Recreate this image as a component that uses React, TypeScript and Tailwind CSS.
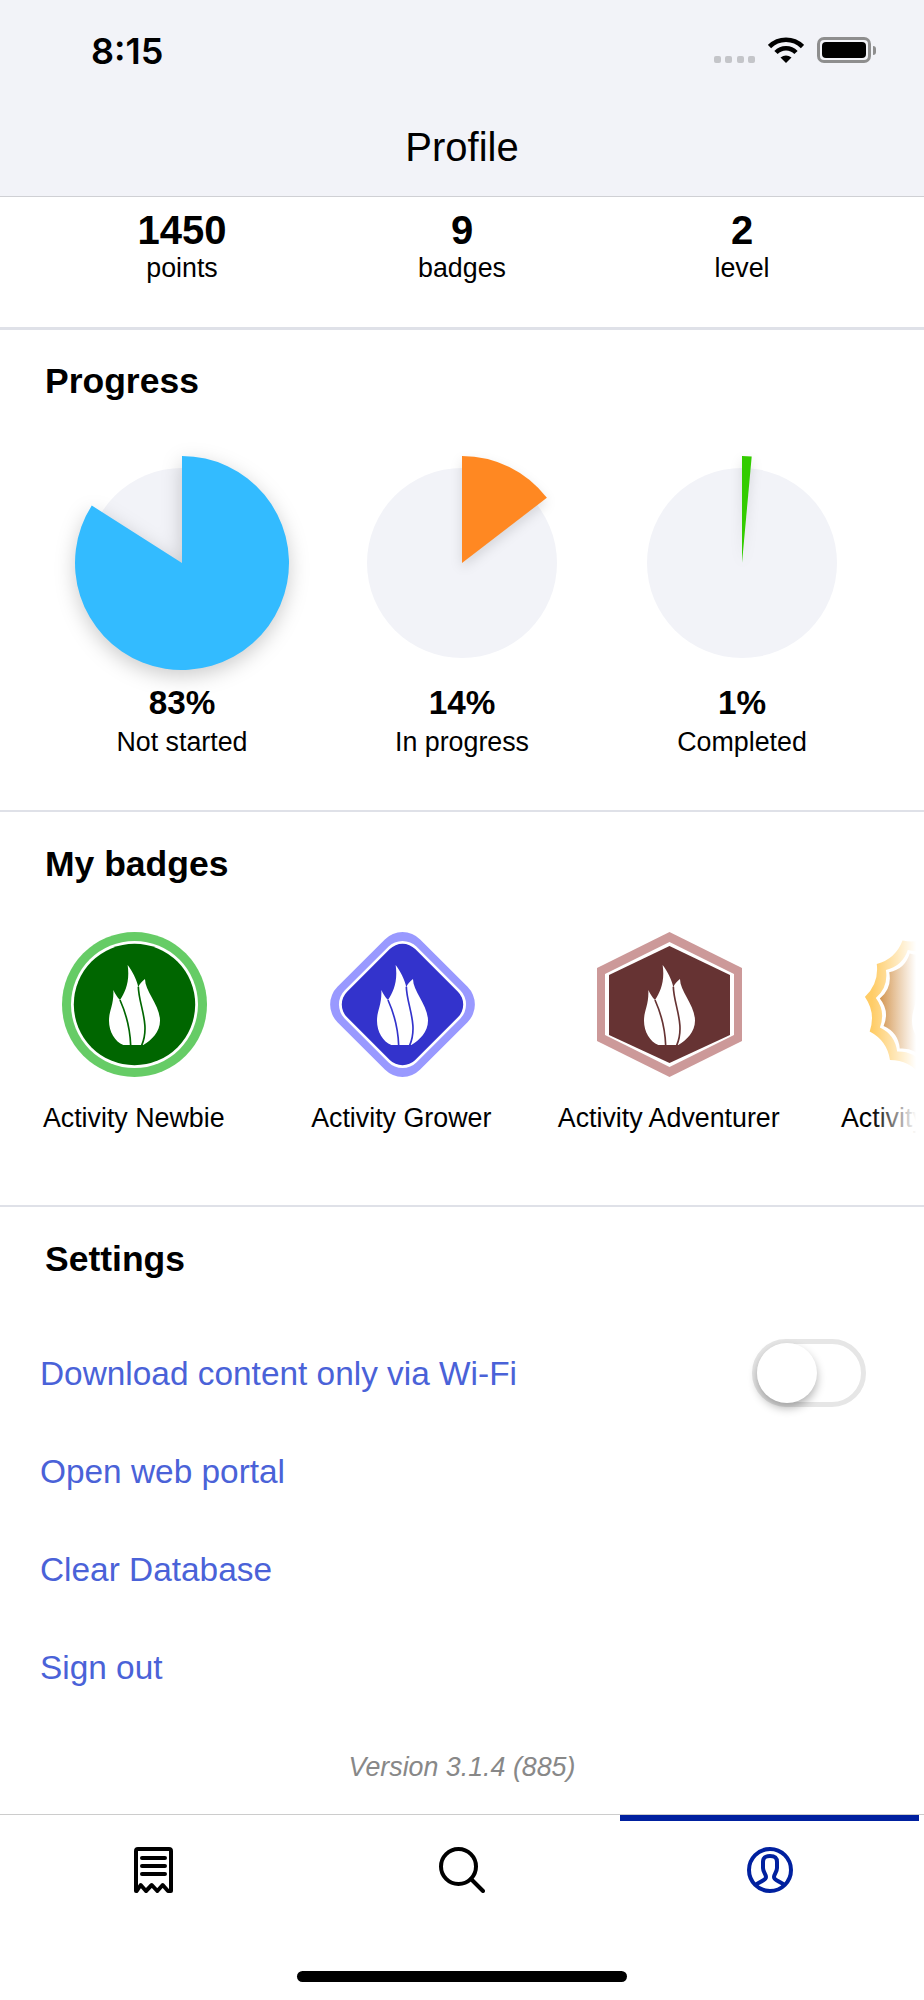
const sans = "font-['Liberation_Sans',Arial,sans-serif]";

// pie slice from 12 o'clock, clockwise
const slice = (deg: number, r = 107, c = 107) => {
  const a = (deg * Math.PI) / 180;
  const x = c + r * Math.sin(a);
  const y = c - r * Math.cos(a);
  return `M${c} ${c} L${c} ${c - r} A${r} ${r} 0 ${deg > 180 ? 1 : 0} 1 ${x.toFixed(2)} ${y.toFixed(2)} Z`;
};

// scalloped edge of the gold badge
const star = (r: number, dent: number) => {
  const n = 13;
  const off = 174;
  const pt = (d: number, rad: number) => {
    const a = (d * Math.PI) / 180;
    return `${(72.5 + rad * Math.cos(a)).toFixed(2)} ${(72.5 - rad * Math.sin(a)).toFixed(2)}`;
  };
  let d = `M${pt(off, r)}`;
  for (let i = 1; i <= n; i++) {
    const a = off + (i * 360) / n;
    d += ` Q${pt(a - 180 / n, dent)} ${pt(a, r)}`;
  }
  return d + "Z";
};

const Flame = ({ color }: { color: string }) => (
  <g transform="translate(28 18) scale(0.3333)">
    <path
      d="M70 120 C76 132 82 142 90 150 C106 125 120 95 113 45 C126 62 140 88 145 112 C148 102 155 95 165 87 C165 125 210 165 210 212 C210 245 185 270 160 285 L100 285 C75 275 57 245 57 212 C57 180 72 165 70 120Z"
      fill="#fff"
    />
    <path
      d="M90 150 C108 190 120 230 122 286 M145 110 C146 165 182 225 155 286"
      fill="none"
      stroke={color}
      strokeWidth="5"
    />
  </g>
);

const Badge = ({ kind }: { kind: number }) => (
  <svg width="145" height="145" viewBox="0 0 145 145" className="shrink-0">
    <defs>
      <linearGradient id="gold" x1="0" x2="1" y1="0" y2="0">
        <stop offset="0" stopColor="#c97f2c" />
        <stop offset="1" stopColor="#e6a860" />
      </linearGradient>
    </defs>
    {kind === 0 && (
      <>
        <circle cx="72.5" cy="72.5" r="72.5" fill="#66cc66" />
        <circle cx="72.5" cy="72.5" r="63.5" fill="#fff" />
        <circle cx="72.5" cy="72.5" r="60.7" fill="#006600" />
        <Flame color="#006600" />
      </>
    )}
    {kind === 1 && (
      <>
        <rect x="14" y="14" width="117" height="117" rx="25" fill="#9999ff" transform="rotate(45 72.5 72.5)" />
        <rect x="21.7" y="21.7" width="101.6" height="101.6" rx="20" fill="#fff" transform="rotate(45 72.5 72.5)" />
        <rect x="24.3" y="24.3" width="96.4" height="96.4" rx="18" fill="#3333cc" transform="rotate(45 72.5 72.5)" />
        <Flame color="#3333cc" />
      </>
    )}
    {kind === 2 && (
      <>
        <polygon points="72.5,0 145,36 145,109 72.5,145 0,109 0,36" fill="#cc9999" />
        <polygon points="72.5,10 137,42 137,103 72.5,135 8,103 8,42" fill="#fff" />
        <polygon points="72.5,14 133,43 133,103 72.5,131 12,103 12,43" fill="#663333" />
        <Flame color="#663333" />
      </>
    )}
    {kind === 3 && (
      <>
        <path d={star(73, 62)} fill="#ffcc66" />
        <path d={star(62, 52)} fill="#fff" />
        <path d={star(58, 48)} fill="url(#gold)" />
        <Flame color="#cc8833" />
      </>
    )}
  </svg>
);

const Pie = ({ deg, color, pct, label, big }: { deg: number; color: string; pct: string; label: string; big?: boolean }) => (
  <div className="flex flex-col items-center">
    <svg width="214" height="214" viewBox="0 0 214 214" className="overflow-visible">
      <circle cx="107" cy="107" r="95" fill="#f2f3f8" />
      <path
        d={slice(deg)}
        fill={color}
        className={big ? "drop-shadow-[0_6px_10px_rgba(0,0,0,0.2)]" : "drop-shadow-[0_5px_6px_rgba(0,0,0,0.12)]"}
      />
    </svg>
    <div className="mt-[13px] text-[33.3px] leading-[40px] font-bold">{pct}</div>
    <div className="mt-[3px] text-[26.8px] leading-[32px]">{label}</div>
  </div>
);

const Stat = ({ value, label }: { value: string; label: string }) => (
  <div className="text-center">
    <div className="text-[40px] leading-[44px] font-bold">{value}</div>
    <div className="text-[26.8px] leading-[32px]">{label}</div>
  </div>
);

const badges = ["Activity Newbie", "Activity Grower", "Activity Adventurer", "Activity Voyager"];
const links = ["Open web portal", "Clear Database", "Sign out"];

export default function App() {
  return (
    <div className={`${sans} w-[924px] h-[2000px] bg-white text-black overflow-hidden`}>
      <header className="h-[197px] bg-[#f2f3f8] border-b border-[#cfd0d4]">
        <div className="h-[100px] flex justify-between pl-[91px] pr-[48px] pt-[30px]">
          <span className="font-['Inter',sans-serif] font-semibold text-[36px] leading-[42px]">8:15</span>
          <div className="flex items-end h-[26px] mt-[7px]">
            <div className="flex gap-[4.5px] mr-[13px]">
              <span className="w-[7px] h-[7px] rounded-[2px] bg-[#c4c5c9]" />
              <span className="w-[7px] h-[7px] rounded-[2px] bg-[#c4c5c9]" />
              <span className="w-[7px] h-[7px] rounded-[2px] bg-[#c4c5c9]" />
              <span className="w-[7px] h-[7px] rounded-[2px] bg-[#c4c5c9]" />
            </div>
            <svg width="36" height="26" viewBox="0 0 36 26" className="mr-[13px]">
              <path d="M1.5 9.5 A23.5 23.5 0 0 1 34.5 9.5" fill="none" stroke="#000" strokeWidth="4.6" />
              <path d="M8 15.5 A14 14 0 0 1 28 15.5" fill="none" stroke="#000" strokeWidth="4.6" />
              <path d="M12.5 20.5 Q18 16.5 23.5 20.5 L18 26Z" fill="#000" />
            </svg>
            <div className="flex items-center">
              <div className="w-[54px] h-[26px] rounded-[7px] border-[3px] border-[#8e8e8e] p-[2px]">
                <div className="w-full h-full rounded-[4px] bg-black" />
              </div>
              <div className="w-[3px] h-[9px] ml-[2px] rounded-r-[3px] bg-[#8e8e8e]" />
            </div>
          </div>
        </div>
        <h1 className="text-center text-[40px] leading-[94px] font-normal">Profile</h1>
      </header>

      <section className="h-[133px] border-b-[3px] border-[#dfe1e8] pt-[11px] grid grid-cols-3 px-[42px] content-start">
        <Stat value="1450" label="points" />
        <Stat value="9" label="badges" />
        <Stat value="2" label="level" />
      </section>

      <section className="h-[482px] border-b-[2px] border-[#dfe1e8] pt-[31px]">
        <h2 className="pl-[45px] text-[35.5px] leading-[40px] font-bold">Progress</h2>
        <div className="mt-[55px] grid grid-cols-3 px-[42px]">
          <Pie big deg={302.5} color="#33bbff" pct="83%" label="Not started" />
          <Pie deg={52.5} color="#ff8822" pct="14%" label="In progress" />
          <Pie deg={5.2} color="#33cc00" pct="1%" label="Completed" />
        </div>
      </section>

      <section className="relative h-[395px] border-b-[2px] border-[#dfe1e8] pt-[32px] overflow-hidden">
        <h2 className="pl-[45px] text-[35.5px] leading-[40px] font-bold">My badges</h2>
        <div className="mt-[48px] flex pl-[1px]">
          {badges.map((b, i) => (
            <div key={b} className="w-[267.5px] shrink-0 flex flex-col items-center">
              <Badge kind={i} />
              <div className="mt-[25px] -ml-[2px] text-[26.8px] leading-[32px] whitespace-nowrap">{b}</div>
            </div>
          ))}
        </div>
        <div className="absolute right-0 top-[90px] w-[52px] h-[240px] bg-gradient-to-r from-white/0 to-white to-[85%]" />
      </section>

      <section className="h-[607px] pt-[32px]">
        <h2 className="pl-[45px] text-[35.5px] leading-[40px] font-bold">Settings</h2>
        <div className="mt-[46px] pl-[40px] text-[33.4px] text-[#4a62d8]">
          <div className="h-[98px] flex items-center justify-between pr-[58px]">
            <span>Download content only via Wi-Fi</span>
            <div className="w-[114px] h-[68px] -mt-[2px] rounded-full border-[5px] border-[#e6e6e6] bg-white">
              <div className="w-[60px] h-[60px] -mt-[1px] rounded-full bg-white shadow-[0_5px_10px_rgba(0,0,0,0.3)]" />
            </div>
          </div>
          {links.map((l) => (
            <div key={l} className="h-[98px] flex items-center">
              {l}
            </div>
          ))}
        </div>
        <div className="mt-[35px] text-center italic text-[26.8px] leading-[30px] text-[#888888]">Version 3.1.4 (885)</div>
      </section>

      <footer className="h-[186px] border-t border-[#cccccc]">
        <div className="grid grid-cols-3">
          <div className="h-[6px]" />
          <div className="h-[6px]" />
          <div className="h-[6px] ml-[4px] mr-[5px] bg-[#00209f]" />
        </div>
        <div className="grid grid-cols-3 mt-[26px] h-[46px]">
          <div className="flex justify-center pr-[2px]">
            <svg width="39" height="46" viewBox="0 0 39 46" fill="none" stroke="#000" strokeWidth="4" strokeLinecap="round" strokeLinejoin="round">
              <path d="M2 44 V4 Q2 2 4 2 H35 Q37 2 37 4 V44 L34 44 L28.7 38 L23.3 44 L17.7 38 L12 44 L6.7 38 L2.7 44" />
              <path d="M8 11 H31 M8 19 H31 M8 27 H31" />
            </svg>
          </div>
          <div className="flex justify-center">
            <svg width="46" height="46" viewBox="0 0 46 46" fill="none" stroke="#000" strokeWidth="4" strokeLinecap="round">
              <circle cx="19.5" cy="19.5" r="17.5" />
              <path d="M32 32 L44 44" />
            </svg>
          </div>
          <div className="flex justify-center">
            <svg width="46" height="46" viewBox="0 0 46 46" fill="none" stroke="#00209f" strokeWidth="4">
              <circle cx="23" cy="23" r="21" />
              <path d="M8.5 38.5 C12 34 19 34 19 30 C19 27 16 25 16 21 V15 C16 10 19 9 23 9 C27 9 30 10 30 15 V21 C30 25 27 27 27 30 C27 34 34 34 37.5 38.5" />
            </svg>
          </div>
        </div>
        <div className="mt-[78px] mx-auto w-[330px] h-[11px] rounded-full bg-black" />
      </footer>
    </div>
  );
}
